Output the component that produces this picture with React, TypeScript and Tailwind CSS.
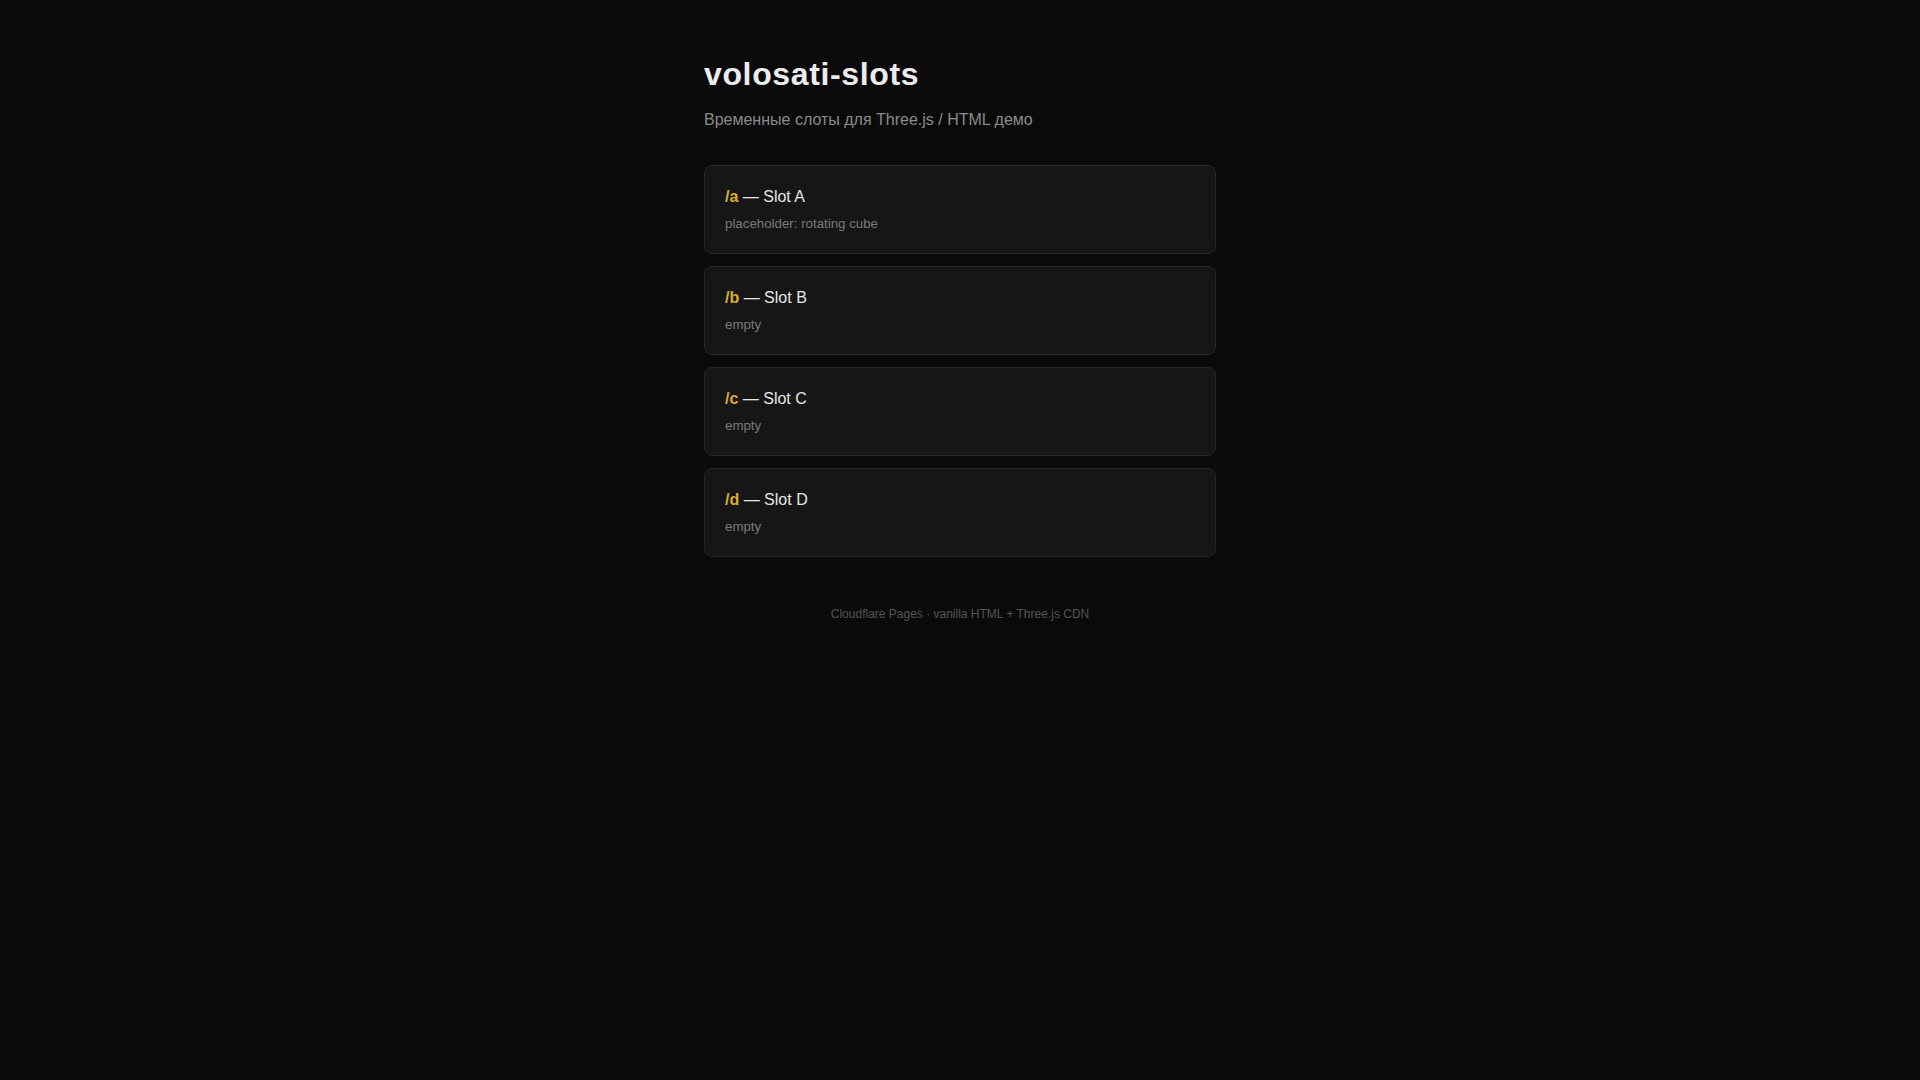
import React from 'react';

interface Slot {
  path: string;
  name: string;
  note: string;
}

const SLOTS: Slot[] = [
  { path: '/a', name: 'Slot A', note: 'placeholder: rotating cube' },
  { path: '/b', name: 'Slot B', note: 'empty' },
  { path: '/c', name: 'Slot C', note: 'empty' },
  { path: '/d', name: 'Slot D', note: 'empty' },
];

const SlotCard: React.FC<{ slot: Slot }> = ({ slot }) => (
  <a
    href={slot.path}
    className="block rounded-lg border border-[#262626] bg-[#161616] px-5 pt-[19px] pb-[20px] hover:border-[#3a3a3a]"
  >
    <div className="text-[16px] leading-6 text-[#e6e6e6]">
      <span className="font-bold text-[#d9ad2c]">{slot.path}</span> — {slot.name}
    </div>
    <div className="mt-[5px] text-[13.3px] leading-[19px] text-[#7a7a7a]">{slot.note}</div>
  </a>
);

const App: React.FC = () => {
  return (
    <div
      className="min-h-screen bg-[#0a0a0a]"
      style={{ fontFamily: '"Liberation Sans", Arial, sans-serif' }}
    >
      <main className="mx-auto w-[512px] pt-[55px]">
        <h1 className="text-[32px] font-bold leading-[38px] tracking-[0.02em] text-[#ececec]">
          volosati-slots
        </h1>
        <p className="mt-[15px] text-[16px] leading-6 text-[#8a8a8a]">
          Временные слоты для Three.js / HTML демо
        </p>

        <div className="mt-[33px] flex flex-col gap-3">
          {SLOTS.map(s => (
            <SlotCard key={s.path} slot={s} />
          ))}
        </div>

        <footer className="mt-[48px] text-center text-[12px] leading-[18px] text-[#555555]">
          Cloudflare Pages · vanilla HTML + Three.js CDN
        </footer>
      </main>
    </div>
  );
};

export default App;
